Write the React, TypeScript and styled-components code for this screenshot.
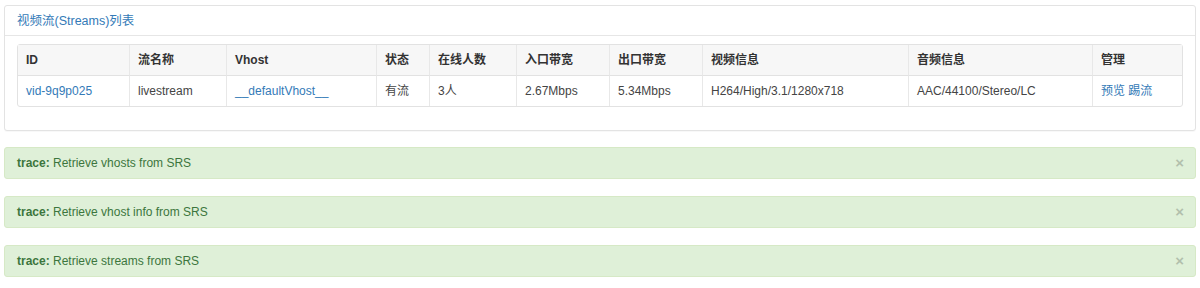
import styled, { createGlobalStyle } from 'styled-components';

const GlobalStyle = createGlobalStyle`
  body {
    margin: 0;
    background: #ffffff;
    font-family: "Liberation Sans", Arial, "Noto Sans CJK SC", sans-serif;
    font-size: 12px;
    color: #333333;
  }
`;

const Page = styled.div`
  padding: 5px 4px 0 4px;
`;

const Panel = styled.div`
  border: 1px solid #e3e3e3;
  border-radius: 3px;
  background: #ffffff;
  margin-bottom: 16px;
  box-shadow: 0 1px 1px rgba(0, 0, 0, 0.03);
`;

const PanelHeading = styled.div`
  padding: 7px 12px 6px 12px;
  line-height: 16px;
  font-size: 12.5px;
  color: #337ab7;
  border-bottom: 1px solid #e6e6e6;
`;

const PanelBody = styled.div`
  padding: 8px 12px;
`;

const Table = styled.table`
  width: 100%;
  table-layout: fixed;
  border-collapse: separate;
  border-spacing: 0;
  border: 1px solid #e2e2e2;
  border-radius: 3px;
  margin-bottom: 15px;
`;

const Th = styled.th`
  text-align: left;
  font-weight: bold;
  background: #f7f7f7;
  padding: 7px 8px 6px 8px;
  line-height: 17px;
  border-bottom: 1px solid #e2e2e2;
  border-left: 1px solid #e8e8e8;
  &:first-child {
    border-left: none;
  }
`;

const Td = styled.td`
  padding: 7px 8px 6px 8px;
  line-height: 17px;
  color: #444444;
  border-left: 1px solid #e8e8e8;
  white-space: nowrap;
  &:first-child {
    border-left: none;
  }
`;

const Link = styled.a`
  color: #337ab7;
  text-decoration: none;
`;

const Alert = styled.div`
  display: flex;
  align-items: center;
  justify-content: space-between;
  padding: 7px 11px 7px 12px;
  line-height: 16px;
  background: #dff0d8;
  border: 1px solid #d6e9c6;
  border-radius: 3px;
  color: #3c763d;
  margin-bottom: 17px;
`;

const Close = styled.span`
  font-size: 15px;
  font-weight: bold;
  line-height: 16px;
  color: #000000;
  opacity: 0.2;
`;

const cols = [111, 97, 150, 53, 87, 93, 93, 206, 184];

const headers = ['ID', '流名称', 'Vhost', '状态', '在线人数', '入口带宽', '出口带宽', '视频信息', '音频信息', '管理'];

const traces = ['Retrieve vhosts from SRS', 'Retrieve vhost info from SRS', 'Retrieve streams from SRS'];

export default function App() {
  return (
    <Page>
      <GlobalStyle />
      <Panel>
        <PanelHeading>视频流(Streams)列表</PanelHeading>
        <PanelBody>
          <Table>
            <colgroup>
              {cols.map((w, i) => (
                <col key={i} style={{ width: w }} />
              ))}
              <col />
            </colgroup>
            <thead>
              <tr>
                {headers.map((h) => (
                  <Th key={h}>{h}</Th>
                ))}
              </tr>
            </thead>
            <tbody>
              <tr>
                <Td>
                  <Link href="#">vid-9q9p025</Link>
                </Td>
                <Td>livestream</Td>
                <Td>
                  <Link href="#">__defaultVhost__</Link>
                </Td>
                <Td>有流</Td>
                <Td>3人</Td>
                <Td>2.67Mbps</Td>
                <Td>5.34Mbps</Td>
                <Td>H264/High/3.1/1280x718</Td>
                <Td>AAC/44100/Stereo/LC</Td>
                <Td>
                  <Link href="#">预览</Link> <Link href="#">踢流</Link>
                </Td>
              </tr>
            </tbody>
          </Table>
        </PanelBody>
      </Panel>
      {traces.map((t) => (
        <Alert key={t}>
          <span>
            <b>trace:</b> {t}
          </span>
          <Close>×</Close>
        </Alert>
      ))}
    </Page>
  );
}
